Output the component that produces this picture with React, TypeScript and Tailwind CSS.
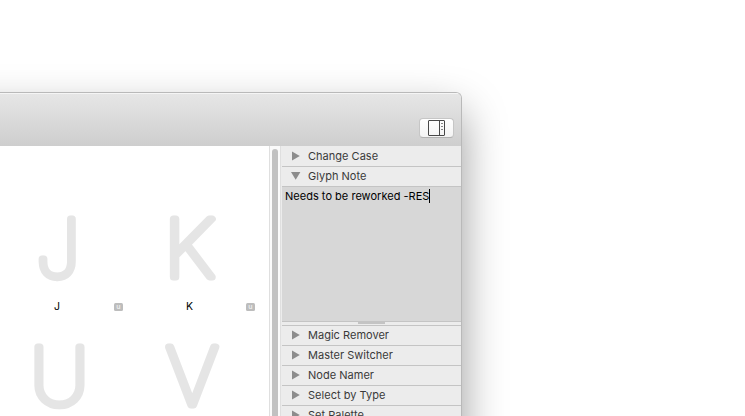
import React from "react";

type Glyph = { char: string; x: number; baseline: number; scaleX: number };

const topRow: Glyph[] = [
  { char: "J", x: 36, baseline: 277, scaleX: 0.99 },
  { char: "K", x: 164.1, baseline: 277, scaleX: 1.07 },
];
const bottomRow: Glyph[] = [
  { char: "U", x: 30, baseline: 405, scaleX: 1.03 },
  { char: "V", x: 166, baseline: 405, scaleX: 1.03 },
];

function GlyphShape({ glyph, index, top }: { glyph: Glyph; index: number; top: number }) {
  return (
    <svg width="132" height="82" viewBox={`${index * 132} ${top} 132 82`} className="block shrink-0 overflow-visible">
      <text
        transform={`translate(${glyph.x} ${glyph.baseline}) scale(${glyph.scaleX} 1)`}
        className="fill-[#e5e5e5] stroke-[#e5e5e5] font-['Inter',sans-serif] font-thin"
        fontSize="79.5"
        strokeWidth="7"
        strokeLinejoin="round"
      >
        {glyph.char}
      </text>
    </svg>
  );
}

function GlyphLabel({ char }: { char: string }) {
  return (
    <div className="flex h-[18px] w-[132px] items-center pl-[54px] text-[10.5px]">
      <span className="w-[60px]">{char}</span>
      <span className="flex h-2 w-[9px] items-center justify-center rounded-[1.5px] bg-[#bdbdbd] text-[7px] leading-[8px] font-semibold text-[#ededed]">
        u
      </span>
    </div>
  );
}

function Triangle({ open = false }: { open?: boolean }) {
  return (
    <svg width="10" height="10" viewBox="0 0 10 10" className="mr-[7px] mb-[2px] ml-[9px] shrink-0 fill-[#8c8c8c]">
      <path d={open ? "M0 1H9.4L4.7 8.8Z" : "M1 .5L8.8 5L1 9.5Z"} />
    </svg>
  );
}

function Row({ label, open = false }: { label: string; open?: boolean }) {
  return (
    <div className="flex h-5 shrink-0 items-center border-b border-[#c4c4c4] text-[11px] text-[#3a3a3a]">
      <Triangle open={open} />
      <span className="tracking-[0.02px]">{label}</span>
    </div>
  );
}

export default function App() {
  return (
    <div className="h-[416px] w-[745px] overflow-hidden bg-white pt-[92px] font-['Inter','Liberation_Sans',sans-serif]">
      <div className="-ml-[100px] h-[600px] w-[562px] rounded-t-[6px] shadow-[0_20px_44px_rgba(0,0,0,0.4)]">
        <div className="flex h-full flex-col overflow-hidden rounded-t-[6px] border-t border-r border-[#b9b9b9] bg-[#ececec] pl-[100px]">
          <header className="-ml-[100px] flex h-[53px] shrink-0 justify-end border-t border-[#f5f5f5] bg-linear-to-b from-[#e6e6e6] to-[#cecece] pt-6 pr-[7px]">
            <button className="flex h-5 w-[35px] items-center justify-center rounded-[4px] border border-[#c6c6c6] border-b-[#b2b2b2] bg-linear-to-b from-white to-[#f4f4f4]">
              <svg width="17" height="16" viewBox="0 0 17 16" className="fill-none stroke-[#484848]">
                <rect x=".5" y=".5" width="16" height="15" rx=".5" />
                <path d="M11.5 .5V15.5" />
                <path d="M13 3.5H15M13 6.5H15M13 9.5H15" className="stroke-[#858585]" />
              </svg>
            </button>
          </header>
          <div className="flex min-h-0 flex-1">
            <main className="flex w-[269px] shrink-0 flex-col bg-white pt-[60px]">
              <div className="flex w-[264px]">
                {topRow.map((g, i) => <GlyphShape key={g.char} glyph={g} index={i} top={206} />)}
              </div>
              <div className="flex pt-[10px] pb-[18px]">
                {topRow.map((g) => <GlyphLabel key={g.char} char={g.char} />)}
              </div>
              <div className="flex w-[264px]">
                {bottomRow.map((g, i) => <GlyphShape key={g.char} glyph={g} index={i} top={334} />)}
              </div>
            </main>
            <div className="flex w-3 shrink-0 justify-center border-x border-[#dfdfdf] bg-[#fafafa] pt-[3px]">
              <div className="h-full w-[6px] rounded-full bg-[#c1c1c1]" />
            </div>
            <aside className="ml-px flex min-w-0 flex-1 flex-col pt-px">
              <Row label="Change Case" />
              <Row label="Glyph Note" open />
              <div className="flex h-[135px] shrink-0 items-start border-b border-[#c4c4c4] bg-[#d7d7d7] pt-[2px] pl-[3px] text-[11px] leading-[14px] text-black">
                <span className="tracking-[0.02px] whitespace-nowrap">Needs to be reworked -RES</span>
                <span className="h-[14px] w-px bg-black" />
              </div>
              <div className="flex h-1 shrink-0 justify-center border-b border-[#c4c4c4]">
                <div className="h-0.5 w-[27px] bg-[#c4c4c4]" />
              </div>
              <Row label="Magic Remover" />
              <Row label="Master Switcher" />
              <Row label="Node Namer" />
              <Row label="Select by Type" />
              <Row label="Set Palette" />
            </aside>
          </div>
        </div>
      </div>
    </div>
  );
}
